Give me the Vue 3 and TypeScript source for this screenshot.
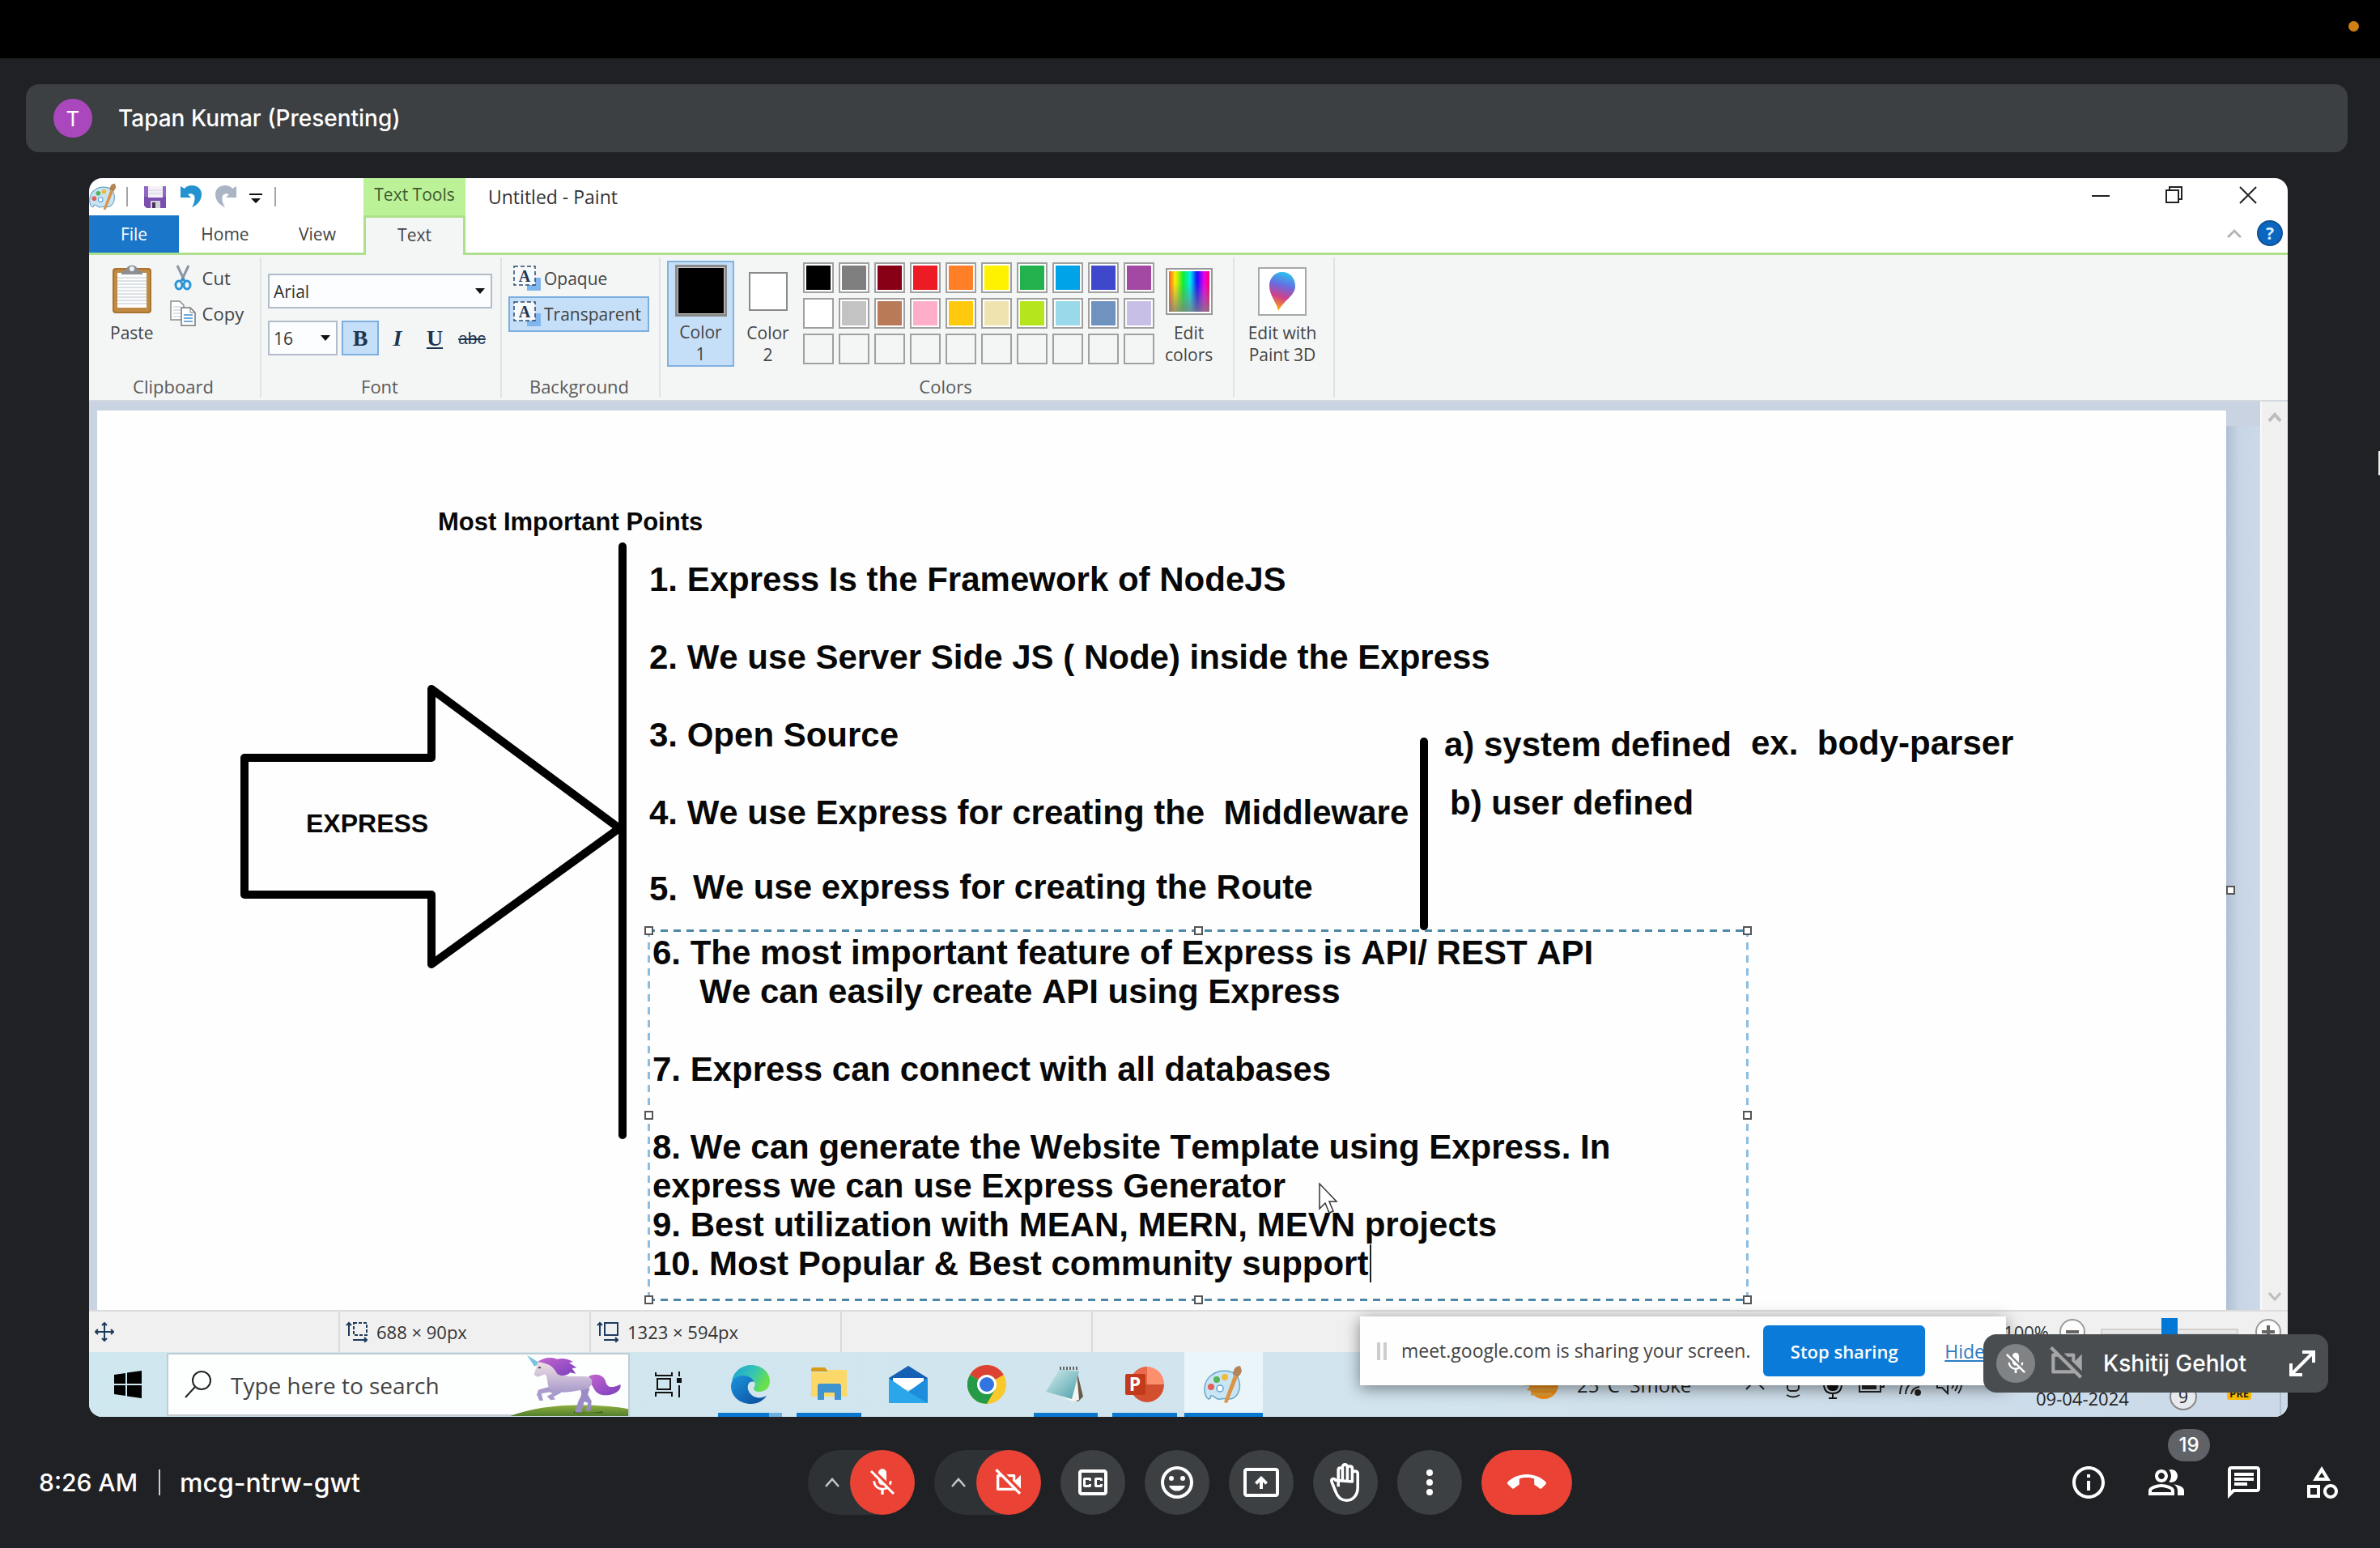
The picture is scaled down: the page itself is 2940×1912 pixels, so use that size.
<script setup lang="ts">
import { ref } from 'vue'

interface Control { label: string; icon: string }

const colorRows: string[][] = [
  ['#000000', '#7f7f7f', '#880015', '#ed1c24', '#ff7f27', '#fff200', '#22b14c', '#00a2e8', '#3f48cc', '#a349a4'],
  ['#ffffff', '#c3c3c3', '#b97a57', '#ffaec9', '#ffc90e', '#efe4b0', '#b5e61d', '#99d9ea', '#7092be', '#c8bfe7'],
  ['', '', '', '', '', '', '', '', '', ''],
]

const font = ref('Arial')
const fontSize = ref('16')
const zoom = ref(50)
const search = ref('')

const points: string[] = [
  '1. Express Is the Framework of NodeJS',
  '2. We use Server Side JS ( Node) inside the Express',
  '3. Open Source',
  '4. We use Express for creating the  Middleware',
]

const note = ref(
  [
    '6. The most important feature of Express is API/ REST API',
    '     We can easily create API using Express',
    '',
    '7. Express can connect with all databases',
    '',
    '8. We can generate the Website Template using Express. In',
    'express we can use Express Generator',
    '9. Best utilization with MEAN, MERN, MEVN projects',
    '10. Most Popular & Best community support',
  ].join('\n'),
)

const handles = ['nw', 'n', 'ne', 'w', 'e', 'sw', 's', 'se']

const micOff =
  'M19 11h-1.7c0 .74-.16 1.43-.43 2.05l1.23 1.23c.56-.98.9-2.09.9-3.28zm-4.02.17c0-.06.02-.11.02-.17V5c0-1.66-1.34-3-3-3S9 3.34 9 5v.18l5.98 5.99zM4.27 3L3 4.27l6.01 6.01V11c0 1.66 1.33 3 2.99 3 .22 0 .44-.03.65-.08l1.66 1.66c-.71.33-1.5.52-2.31.52-2.76 0-5.3-2.1-5.3-5.1H5c0 3.41 2.72 6.23 6 6.72V21h2v-3.28c.91-.13 1.77-.45 2.54-.9L19.73 21 21 19.73 4.27 3z'
const camOff =
  'M9.56 8l-2-2-4.15-4.14L2 3.27 4.73 6H4c-.55 0-1 .45-1 1v10c0 .55.45 1 1 1h12c.21 0 .39-.08.55-.18L19.73 21l1.41-1.41-8.86-8.86L9.56 8zM5 16V8h1.73l8 8H5zm10-8v2.61l6 6V6.5l-4 4V7c0-.55-.45-1-1-1h-5.61l2 2H15z'

const toggles: Control[] = [
  { label: 'microphone', icon: micOff },
  { label: 'camera', icon: camOff },
]

const actions: Control[] = [
  {
    label: 'Captions',
    icon: 'M19 4H5c-1.11 0-2 .9-2 2v12c0 1.1.89 2 2 2h14c1.1 0 2-.9 2-2V6c0-1.1-.9-2-2-2zm0 14H5V6h14v12zM7 15h3c.55 0 1-.45 1-1v-1H9.5v.5h-2v-3h2v.5H11v-1c0-.55-.45-1-1-1H7c-.55 0-1 .45-1 1v4c0 .55.45 1 1 1zm7 0h3c.55 0 1-.45 1-1v-1h-1.5v.5h-2v-3h2v.5H18v-1c0-.55-.45-1-1-1h-3c-.55 0-1 .45-1 1v4c0 .55.45 1 1 1z',
  },
  {
    label: 'Send a reaction',
    icon: 'M12 2a10 10 0 1 0 0 20 10 10 0 0 0 0-20zm0 18a8 8 0 1 1 0-16 8 8 0 0 1 0 16zM8.5 8a1.5 1.5 0 1 0 0 3 1.5 1.5 0 0 0 0-3zm7 0a1.5 1.5 0 1 0 0 3 1.5 1.5 0 0 0 0-3zM7 14c.8 2 2.7 3.3 5 3.3s4.200-1.300 5-3.300z',
  },
  {
    label: 'Present now',
    icon: 'M21 3H3c-1.100 0-2 .9-2 2v14c0 1.100.9 2 2 2h18c1.100 0 2-.9 2-2V5c0-1.100-.9-2-2-2zm0 16H3V5h18v14zM8 12l1.400 1.400L11 11.800V16h2v-4.200l1.600 1.600L16 12l-4-4z',
  },
]

const panels: Control[] = [
  {
    label: 'Meeting details',
    icon: 'M11 7h2v2h-2zm0 4h2v6h-2zm1-9C6.480 2 2 6.480 2 12s4.480 10 10 10 10-4.480 10-10S17.520 2 12 2zm0 18c-4.410 0-8-3.590-8-8s3.590-8 8-8 8 3.590 8 8-3.590 8-8 8z',
  },
  {
    label: 'People',
    icon: 'M15 8c0-1.420-.5-2.730-1.330-3.760.42-.14.86-.24 1.330-.24 2.210 0 4 1.790 4 4s-1.790 4-4 4c-.43 0-.84-.09-1.230-.21-.03-.01-.06-.02-.1-.03A5.980 5.980 0 0 0 15 8zm1.660 5.130C18.030 14.060 19 15.320 19 17v3h4v-3c0-2.180-3.580-3.470-6.340-3.870zM9 6c-1.100 0-2 .9-2 2s.9 2 2 2 2-.9 2-2-.9-2-2-2m0 9c-2.700 0-5.800 1.290-6 2.010V18h12v-1c-.2-.71-3.300-2-6-2M9 4c2.210 0 4 1.790 4 4s-1.790 4-4 4-4-1.790-4-4 1.790-4 4-4zm0 9c2.670 0 8 1.340 8 4v3H1v-3c0-2.660 5.330-4 8-4z',
  },
  {
    label: 'Chat',
    icon: 'M4 4h16v12H5.170L4 17.170V4m0-2c-1.100 0-1.990.9-1.990 2L2 22l4-4h14c1.100 0 2-.9 2-2V4c0-1.100-.9-2-2-2H4zm2 10h8v2H6v-2zm0-3h12v2H6V9zm0-3h12v2H6V6z',
  },
  {
    label: 'Activities',
    icon: 'M12 2l-5.500 9h11L12 2zm0 3.840L13.930 9h-3.870L12 5.840zM17.500 13c-2.490 0-4.500 2.010-4.500 4.500s2.010 4.500 4.500 4.500 4.500-2.010 4.500-4.500-2.010-4.500-4.500-4.500zm0 7c-1.380 0-2.500-1.120-2.500-2.500s1.120-2.500 2.500-2.500 2.500 1.120 2.500 2.500-1.120 2.500-2.500 2.500zM3 21.500h8v-8H3v8zm2-6h4v4H5v-4z',
  },
]

const callEnd =
  'M12 9c-1.600 0-3.150.25-4.600.72v3.100c0 .39-.23.74-.56.9-.98.49-1.870 1.120-2.660 1.850-.18.18-.43.28-.7.28-.28 0-.53-.11-.71-.29L.29 13.080c-.18-.17-.29-.42-.29-.7 0-.28.11-.53.29-.71C3.340 8.780 7.460 7 12 7s8.660 1.780 11.710 4.670c.18.18.29.43.29.71 0 .28-.11.53-.29.71l-2.480 2.480c-.18.18-.43.29-.71.29-.27 0-.52-.11-.7-.28-.79-.74-1.690-1.360-2.670-1.850-.33-.16-.56-.5-.56-.9v-3.100C15.150 9.250 13.600 9 12 9z'
</script>

<template>
  <div class="page">
    <div class="menubar"><span class="privacy-dot"></span></div>

    <header class="presenter">
      <span class="avatar">T</span>
      <span class="presenter-name">Tapan Kumar (Presenting)</span>
    </header>

    <main class="stage">
      <section class="window">
        <!-- title bar -->
        <div class="titlebar">
          <div class="quick">
            <svg class="q-app" viewBox="0 0 48 48"><use href="#paint-logo" /></svg>
            <i class="q-sep"></i>
            <button class="bare q-save" aria-label="Save">
              <svg width="28" height="28" viewBox="0 0 28 28">
                <path d="M0 1h27v27H3l-3-3z" fill="#7b4fb0" />
                <path d="M0 1h27v13H0z" fill="#9067c2" />
                <path d="M5 1h18v14H5z" fill="#f3f0f8" />
                <path d="M6 6h16M6 10h16" stroke="#d4cce2" />
                <path d="M8 19h12v9H8z" fill="#cfd0d8" />
                <path d="M10 21h4v7h-4z" fill="#473260" />
              </svg>
            </button>
            <button class="bare q-undo" aria-label="Undo">
              <svg width="28" height="28" viewBox="0 0 28 28"><path d="M1 1v14h13l-4-4c8-3 12 4 5 16 16-6 16-27 0-27-4 0-7 1-9 4z" fill="#2492cf" /></svg>
            </button>
            <button class="bare q-redo" aria-label="Redo">
              <svg width="28" height="28" viewBox="0 0 28 28"><path d="M27 1v14H14l4-4c-8-3-12 4-5 16C-3 21-3 0 13 0c4 0 7 1 9 4z" fill="#a9b4c4" /></svg>
            </button>
            <button class="bare q-more" aria-label="Customize toolbar">
              <svg width="16" height="14" viewBox="0 0 16 14"><path d="M0 1h16v2H0zM2 7h12l-6 6z" fill="#111" /></svg>
            </button>
            <i class="q-sep"></i>
          </div>
          <div class="context">Text Tools</div>
          <h1 class="title">Untitled - Paint</h1>
          <div class="win-buttons">
            <button class="bare" aria-label="Minimize"><svg width="22" height="22" viewBox="0 0 22 22"><path d="M0 12h22" stroke="#222" stroke-width="2" /></svg></button>
            <button class="bare" aria-label="Restore"><svg width="22" height="22" viewBox="0 0 22 22"><path d="M1 5h15v15H1zM5 5V1h15v15h-4" fill="none" stroke="#222" stroke-width="2" /></svg></button>
            <button class="bare" aria-label="Close"><svg width="22" height="22" viewBox="0 0 22 22"><path d="M1 1l20 20M21 1L1 21" stroke="#222" stroke-width="2" /></svg></button>
          </div>
        </div>

        <!-- tabs -->
        <nav class="tabs">
          <button class="tab file">File</button>
          <button class="tab">Home</button>
          <button class="tab">View</button>
          <button class="tab current">Text</button>
          <div class="tabs-end">
            <button class="bare" aria-label="Collapse ribbon"><svg width="18" height="12" viewBox="0 0 18 12"><path d="M1 11l8-8 8 8" fill="none" stroke="#b4b4b4" stroke-width="3" /></svg></button>
            <button class="help" aria-label="Help">?</button>
          </div>
        </nav>

        <!-- ribbon -->
        <div class="ribbon">
          <section class="group g-clip">
            <div class="body">
              <button class="big paste">
                <svg width="50" height="62" viewBox="0 0 50 62">
                  <rect x="1" y="4" width="48" height="56" rx="4" fill="#a9742f" />
                  <rect x="3" y="6" width="44" height="52" rx="3" fill="#c08a45" />
                  <path d="M7 10h36v43H7z" fill="#fdfdfd" />
                  <path d="M7 16h36M7 20h36M7 24h36M7 28h36M7 32h36M7 36h36M7 40h36M7 44h36M7 48h36" stroke="#bcc6d2" />
                  <path d="M12 12v-3l6-3c1-7 13-7 14 0l6 3v3z" fill="#8b8f94" />
                  <circle cx="25" cy="5" r="3" fill="#f1f1f1" />
                </svg>
                <span>Paste</span>
              </button>
              <div class="stack">
                <button class="row">
                  <svg width="32" height="32" viewBox="0 0 32 32">
                    <path d="M9 1l9 19M23 1l-9 19" stroke="#8c96a4" stroke-width="3" />
                    <ellipse cx="11" cy="25" rx="4" ry="5" fill="none" stroke="#2a94d6" stroke-width="3" />
                    <ellipse cx="21" cy="25" rx="4" ry="5" fill="none" stroke="#2a94d6" stroke-width="3" />
                    <path d="M13 20l3-5 3 5z" fill="#2a94d6" />
                  </svg>
                  <span>Cut</span>
                </button>
                <button class="row">
                  <svg width="32" height="32" viewBox="0 0 32 32">
                    <path d="M1 1h11l5 5v18H1z" fill="#fff" stroke="#8a8a8a" stroke-width="1.500" />
                    <path d="M4 8h9M4 12h9M4 16h9M4 20h9" stroke="#b7c4d2" />
                    <path d="M14 9h11l6 6v16H14z" fill="#fff" stroke="#777" stroke-width="1.500" />
                    <path d="M25 9v6h6" fill="none" stroke="#777" />
                    <path d="M17 18h11M17 22h11M17 26h11" stroke="#3f8fd0" stroke-width="1.500" />
                  </svg>
                  <span>Copy</span>
                </button>
              </div>
            </div>
            <h2>Clipboard</h2>
          </section>

          <section class="group g-font">
            <div class="body font-body">
              <label class="combo wide">
                <select v-model="font" aria-label="Font family"><option>Arial</option></select>
                <svg width="12" height="8" viewBox="0 0 12 8"><path d="M0 0h12L6 7z" fill="#111" /></svg>
              </label>
              <div class="font-row">
                <label class="combo small">
                  <select v-model="fontSize" aria-label="Font size"><option>16</option></select>
                  <svg width="12" height="8" viewBox="0 0 12 8"><path d="M0 0h12L6 7z" fill="#111" /></svg>
                </label>
                <button class="style bold on">B</button>
                <button class="style italic">I</button>
                <button class="style under">U</button>
                <button class="style strike">abc</button>
              </div>
            </div>
            <h2>Font</h2>
          </section>

          <section class="group g-back">
            <div class="body back-body">
              <button v-for="mode in ['Opaque', 'Transparent']" :key="mode" class="mode" :class="{ on: mode === 'Transparent' }">
                <svg width="34" height="32" viewBox="0 0 34 32">
                  <path d="M17 15h17v16H17z" fill="#7fb6ee" />
                  <path d="M1 1h26v23H1z" fill="#f6fafd" stroke="#2d4a6a" stroke-width="1.500" stroke-dasharray="5 3" />
                  <text x="14" y="20" text-anchor="middle" class="mode-letter">A</text>
                </svg>
                <span>{{ mode }}</span>
              </button>
            </div>
            <h2>Background</h2>
          </section>

          <section class="group g-colors">
            <div class="body color-body">
              <button class="slot on"><i class="chip black"></i><span>Color<br />1</span></button>
              <button class="slot"><i class="chip white"></i><span>Color<br />2</span></button>
              <div class="palette">
                <template v-for="(row, r) in colorRows" :key="r">
                  <button
                    v-for="(color, c) in row"
                    :key="c"
                    class="cell"
                    :class="{ empty: !color }"
                    :aria-label="color || 'Empty color'"
                    :style="{ backgroundColor: color || 'transparent' }"
                  ></button>
                </template>
              </div>
              <button class="big edit"><i class="spectrum"></i><span>Edit<br />colors</span></button>
            </div>
            <h2>Colors</h2>
          </section>

          <section class="group g-3d">
            <div class="body">
              <button class="big edit3d">
                <svg width="60" height="60" viewBox="0 0 60 60">
                  <defs>
                    <linearGradient id="drop" x1="0.600" y1="0" x2="0.400" y2="1">
                      <stop offset="0" stop-color="#27c3f0" /><stop offset="0.350" stop-color="#6a6be0" />
                      <stop offset="0.650" stop-color="#d0408a" /><stop offset="1" stop-color="#ffb000" />
                    </linearGradient>
                  </defs>
                  <rect x="1" y="1" width="58" height="58" fill="#fff" stroke="#a8a8a8" stroke-width="2" />
                  <path d="M30 6c10 0 16 8 16 17 0 12-12 16-21 31-1-9-11-19-11-31C14 14 20 6 30 6z" fill="url(#drop)" />
                </svg>
                <span>Edit with<br />Paint 3D</span>
              </button>
            </div>
          </section>
        </div>

        <!-- drawing area -->
        <div class="workspace">
          <div class="paper">
            <svg class="shapes" width="2600" height="1110" viewBox="0 0 2600 1110" fill="none" stroke="#000" stroke-width="10" stroke-linecap="round" stroke-linejoin="round">
              <path d="M182 429h231v-85l232 172-232 168v-86H182z" />
              <path d="M649 168v727M1639 409v228" />
            </svg>
            <p class="ink heading">Most Important Points</p>
            <p class="ink express">EXPRESS</p>
            <ul class="ink points">
              <li v-for="p in points" :key="p">{{ p }}</li>
            </ul>
            <p class="ink five">5.</p>
            <p class="ink route">We use express for creating the Route</p>
            <p class="ink sys">a) system defined</p>
            <p class="ink ex">ex.&nbsp; body-parser</p>
            <p class="ink usr">b) user defined</p>
            <div class="textbox">
              <textarea v-model="note" aria-label="Text on canvas" spellcheck="false"></textarea>
              <i v-for="h in handles" :key="h" class="handle" :class="h"></i>
              <i class="caret"></i>
            </div>
            <svg class="pointer" width="24" height="40" viewBox="0 0 24 40"><path d="M1 2v31l7-7 5 12 5-2-5-12h9z" fill="#fff" stroke="#333" stroke-width="1.500" /></svg>
            <i class="handle paper-handle"></i>
          </div>
          <div class="gutter"></div>
          <div class="scroll">
            <svg width="16" height="14" viewBox="0 0 16 14"><path d="M1 12l7-8 7 8" fill="none" stroke="#bdbdbd" stroke-width="4" /></svg>
            <svg width="16" height="14" viewBox="0 0 16 14"><path d="M1 2l7 8 7-8" fill="none" stroke="#bdbdbd" stroke-width="3" /></svg>
          </div>
        </div>

        <!-- status bar -->
        <div class="status">
          <div class="st">
            <svg width="24" height="24" viewBox="0 0 24 24" fill="none" stroke="#1f3b5c" stroke-width="2"><path d="M12 1v22M1 12h22M9 4l3-3 3 3M9 20l3 3 3-3M4 9l-3 3 3 3M20 9l3 3-3 3" /></svg>
          </div>
          <div class="st">
            <svg width="28" height="26" viewBox="0 0 28 26" fill="none" stroke="#1f3b5c" stroke-width="2"><path d="M4 18V2M1 5l3-3 3 3M9 23h17M23 20l3 3-3 3" /><path d="M10 2h16v15H10z" stroke-dasharray="4 2" /></svg>
            <span>688 × 90px</span>
          </div>
          <div class="st">
            <svg width="28" height="26" viewBox="0 0 28 26" fill="none" stroke="#1f3b5c" stroke-width="2"><path d="M4 18V2M1 5l3-3 3 3M9 23h17M23 20l3 3-3 3M10 2h16v15H10z" /></svg>
            <span>1323 × 594px</span>
          </div>
          <div class="st"></div>
          <div class="zoom">
            <span class="pct">100%</span>
            <button class="round" aria-label="Zoom out"><svg width="16" height="16" viewBox="0 0 16 16"><path d="M0 8h16" stroke="#666" stroke-width="4" /></svg></button>
            <input v-model="zoom" type="range" min="0" max="100" aria-label="Zoom" />
            <button class="round" aria-label="Zoom in"><svg width="16" height="16" viewBox="0 0 16 16"><path d="M0 8h16M8 0v16" stroke="#666" stroke-width="4" /></svg></button>
          </div>
        </div>

        <!-- taskbar -->
        <div class="taskbar">
          <button class="bare start" aria-label="Start">
            <svg width="34" height="34" viewBox="0 0 34 34"><path d="M0 5l14-2v13H0zM16 2.500L34 0v16H16zM0 18h14v13L0 29zM16 18h18v16l-18-2.500z" fill="#000" /></svg>
          </button>
          <label class="searchbox">
            <svg width="34" height="34" viewBox="0 0 34 34"><circle cx="21" cy="12" r="11" fill="none" stroke="#222" stroke-width="2" /><path d="M13 20L1 33" stroke="#222" stroke-width="2" /></svg>
            <input v-model="search" type="text" placeholder="Type here to search" />
            <svg class="unicorn" width="148" height="78" viewBox="0 0 148 78">
              <defs>
                <linearGradient id="hill" x1="0" y1="0" x2="0" y2="1"><stop offset="0" stop-color="#8fae3f" /><stop offset="1" stop-color="#4d7a2a" /></linearGradient>
                <linearGradient id="coat" x1="0" y1="0" x2="0" y2="1"><stop offset="0" stop-color="#f2e2e4" /><stop offset="1" stop-color="#a99acb" /></linearGradient>
                <linearGradient id="mane" x1="0" y1="0" x2="1" y2="1"><stop offset="0" stop-color="#c465cf" /><stop offset="1" stop-color="#7a3fbd" /></linearGradient>
              </defs>
              <g transform="scale(.574 .333) translate(-923 -213)">
                <path d="M923 450Q990 405 1085 407q60 2 96 14v30z" fill="url(#hill)" />
                <path d="M1064 430q30 10 62 0v6h-62z" fill="#3c5d20" />
                <path d="M963 221l28 30-12 12z" fill="#7bc3df" />
                <path d="M1096 300c16-14 32-4 36 18 4 26 14 26 32 12 4 22-14 40-32 40-28-2-24-40-36-50z" fill="url(#mane)" />
                <path d="M1074 340c10 18 6 34 0 50l-8 44h14l6-40 8 4-4 30h10l2-36-8-24 4-24z" fill="#9a8cc4" />
                <path d="M1012 338l-24 12-4 18 6 22h8l-4-26 18-6 6 6-12 10 8 14 10-2-4-10 16-14-2-22z" fill="#a99acb" />
                <path d="M986 250c10-10 26-8 36 14l8 26c20 16 46 6 66 12 12 10 8 36-6 46-24 4-50 22-76 2-10-16-4-40-12-58l-16 10-8-8z" fill="url(#coat)" />
                <path d="M986 246c14-18 30-18 42-10 16-6 28 4 34 10l-8 4 16 18-10 2 8 20-12-4c-8 14-20 14-28 4-8-22-12-36-42-44z" fill="url(#mane)" />
                <circle cx="990" cy="268" r="3" fill="#333" />
              </g>
            </svg>
          </label>
          <button class="bare taskview" aria-label="Task view">
            <svg width="36" height="32" viewBox="0 0 36 32" fill="none" stroke="#111" stroke-width="2"><path d="M2 1v4h20V1M4 9h16v13H4zM2 31v-5h20v5M31 0v6M31 17v15" /><path d="M28 8h6v6h-6z" fill="#111" stroke="none" /></svg>
          </button>
          <div class="apps">
            <button class="app open edge" aria-label="Edge">
              <svg width="48" height="48" viewBox="0 0 48 48">
                <defs>
                  <linearGradient id="e1" x1="0" y1="0" x2="1" y2="0.400"><stop offset="0" stop-color="#1b9fd8" /><stop offset="0.600" stop-color="#36c6b2" /><stop offset="1" stop-color="#6ae04a" /></linearGradient>
                  <linearGradient id="e2" x1="0" y1="0" x2="1" y2="1"><stop offset="0" stop-color="#1b94dd" /><stop offset="1" stop-color="#0c4a9a" /></linearGradient>
                </defs>
                <path d="M1 20C3 8 13 0 25 0c13 0 23 9 23 20 0 8-6 13-13 13-5 0-7-2-7-4s3-3 1-8c-4-9-21-8-28-1z" fill="url(#e1)" />
                <path d="M0 26c0-8 7-13 14-13 6 0 12 2 15 8-7-2-9 4-8 9 2 8 12 14 23 8-4 6-11 10-19 10C10 48 0 38 0 26z" fill="url(#e2)" />
              </svg>
            </button>
            <button class="app open" aria-label="File Explorer">
              <svg width="46" height="42" viewBox="0 0 46 42">
                <path d="M1 3q0-3 3-3h14l4 5H1z" fill="#d79b18" /><path d="M1 6h19l3-3h22v33H1z" fill="#fbd867" />
                <path d="M9 40V23q0-3 3-3h23q3 0 3 3v17h-8v-9H17v9z" fill="#3f93cf" />
              </svg>
            </button>
            <button class="app" aria-label="Mail">
              <svg width="48" height="46" viewBox="0 0 48 46">
                <path d="M0 15L24 0l24 15v8H0z" fill="#1560b4" /><path d="M5 15h38v14H5z" fill="#fff" />
                <path d="M0 15l24 17 24-17v31H0z" fill="#2aa6ea" /><path d="M48 15v31L24 32z" fill="#1c8edb" />
              </svg>
            </button>
            <button class="app" aria-label="Chrome">
              <svg width="48" height="48" viewBox="0 0 48 48">
                <circle cx="24" cy="24" r="24" fill="#f9c92c" />
                <path d="M24 24L3.200 12A24 24 0 0 1 44.800 12z" fill="#dc4234" />
                <path d="M24 24l-20.800-12A24 24 0 0 0 24 48l10.400-18z" fill="#259b48" />
                <circle cx="24" cy="24" r="12" fill="#fff" /><circle cx="24" cy="24" r="9" fill="#3375e0" />
              </svg>
            </button>
            <button class="app open" aria-label="Notepad">
              <svg width="48" height="46" viewBox="0 0 48 46">
                <defs><linearGradient id="np" x1="0" y1="0" x2="1" y2="1"><stop offset="0" stop-color="#d7eef0" /><stop offset="1" stop-color="#4b9fa8" /></linearGradient></defs>
                <path d="M38 5l8 33-6 6-6-2z" fill="#6a5a48" /><path d="M14 36l24-28 3 34-8 2z" fill="#f4f4f0" />
                <path d="M17 4l24 3-9 34L0 32z" fill="url(#np)" /><path d="M17 3h24" stroke="#666" stroke-width="4" stroke-dasharray="2 2" />
              </svg>
            </button>
            <button class="app open" aria-label="PowerPoint">
              <svg width="48" height="44" viewBox="0 0 48 44">
                <path d="M27 0a21 22 0 1 0 21 22H27z" fill="#d2502f" /><path d="M27 0a21 22 0 0 1 21 22H27z" fill="#fb8f6e" /><path d="M27 0v22H6A21 22 0 0 1 27 0z" fill="#e9694a" />
                <rect x="0" y="9" width="25" height="26" rx="2" fill="#c13b1b" />
                <text x="12" y="30" text-anchor="middle" class="ppt-letter">P</text>
              </svg>
            </button>
            <button class="app open active" aria-label="Paint"><svg width="48" height="48" viewBox="0 0 48 48"><use href="#paint-logo" /></svg></button>
          </div>
          <div class="tray">
            <svg width="44" height="44" viewBox="0 0 44 44"><circle cx="24" cy="22" r="18" fill="#ee8a17" /><path d="M0 22h30M4 28h36M8 34h26" stroke="#d9a03f" stroke-width="3" /></svg>
            <span class="weather">25°C&nbsp; Smoke</span>
            <span class="ti"><svg width="24" height="14" viewBox="0 0 24 14"><path d="M1 13L12 2l11 11" fill="none" stroke="#222" stroke-width="2" /></svg></span>
            <span class="ti"><svg width="22" height="36" viewBox="0 0 22 36" fill="none" stroke="#222" stroke-width="2"><rect x="3" y="6" width="14" height="20" rx="4" /><path d="M2 31q8 5 16 0M17 17h4" /></svg></span>
            <span class="ti"><svg width="26" height="36" viewBox="0 0 26 36"><rect x="6" y="0" width="14" height="26" rx="6" fill="#111" /><path d="M2 17q0 12 11 12t11-12M13 29v6M8 35h10" fill="none" stroke="#111" stroke-width="2" /></svg></span>
            <span class="ti"><svg width="32" height="22" viewBox="0 0 32 22"><path d="M1 1h26v19H1zM27 6h4v8h-4" fill="none" stroke="#222" stroke-width="2" /><path d="M4 4h18v13H4z" fill="#222" /></svg></span>
            <span class="ti"><svg width="28" height="28" viewBox="0 0 28 28" fill="none" stroke="#222" stroke-width="2"><path d="M1 26Q2 3 25 2M8 26Q9 11 25 9M15 26q1-8 10-9" /><circle cx="23" cy="24" r="3" fill="#222" /></svg></span>
            <span class="ti"><svg width="32" height="26" viewBox="0 0 32 26" fill="none" stroke="#222" stroke-width="2"><path d="M1 9h6l7-7v22l-7-7H1zM19 8q4 5 0 10M23 5q6 8 0 16M27 2q8 11 0 22" /></svg></span>
            <span class="date">09-04-2024</span>
            <span class="notify">9</span>
            <span class="pre">PRE</span>
            <i class="desk"></i>
          </div>
        </div>

        <!-- sharing notice -->
        <div class="sharing">
          <i class="grip"></i>
          <span>meet.google.com is sharing your screen.</span>
          <button class="stop">Stop sharing</button>
          <a href="#" class="hide">Hide</a>
        </div>
      </section>

      <div class="self">
        <span class="self-mic"><svg width="32" height="32" viewBox="0 0 24 24" fill="#fff"><path :d="micOff" /></svg></span>
        <svg width="50" height="50" viewBox="0 0 24 24" fill="#a4a6a8"><path :d="camOff" /></svg>
        <span class="self-name">Kshitij Gehlot</span>
        <button class="bare" aria-label="Expand"><svg width="32" height="32" viewBox="0 0 32 32"><path d="M3 29L29 3M16 2h14v13M2 16v14h14" fill="none" stroke="#fff" stroke-width="4" /></svg></button>
      </div>
      <i class="edge-mark"></i>
    </main>

    <footer class="controls">
      <div class="meeting"><span>8:26 AM</span><i></i><span class="code">mcg-ntrw-gwt</span></div>
      <div class="buttons">
        <div v-for="t in toggles" :key="t.label" class="toggle">
          <button class="more" :aria-label="t.label + ' settings'"><svg width="20" height="14" viewBox="0 0 20 14"><path d="M2 12l8-9 8 9" fill="none" stroke="#c4c7c9" stroke-width="2.500" /></svg></button>
          <button class="circle red" :aria-label="'Turn on ' + t.label"><svg width="40" height="40" viewBox="0 0 24 24" fill="#fff"><path :d="t.icon" /></svg></button>
        </div>
        <button v-for="a in actions" :key="a.label" class="circle" :aria-label="a.label"><svg width="48" height="48" viewBox="0 0 24 24" fill="#fff"><path :d="a.icon" /></svg></button>
        <button class="circle" aria-label="Raise hand">
          <svg width="48" height="48" viewBox="0 0 24 24" fill="none" stroke="#fff" stroke-width="1.800" stroke-linejoin="round">
            <path d="M7.600 14.600V4.300c0-1.700 2.600-1.700 2.600 0V11.500M10.200 11.500V2.600c0-2.200 3-2.200 3 0V11.500M13.200 11.500V3.300c0-1.700 3-1.700 3 0V11.500M16.200 11.500V6.400c0-1.800 3.400-1.800 3.400 0v8.700c0 4.600-2.800 8-6.900 8-3.500 0-5.500-2.100-6.600-5.100L3.500 11.500c-.5-1.600 1.600-2.500 2.500-.8z" />
          </svg>
        </button>
        <button class="circle" aria-label="More options"><svg width="48" height="48" viewBox="0 0 24 24" fill="#fff"><circle cx="12" cy="6" r="2" /><circle cx="12" cy="12" r="2" /><circle cx="12" cy="18" r="2" /></svg></button>
        <button class="circle red leave" aria-label="Leave call"><svg width="48" height="48" viewBox="0 0 24 24" fill="#fff"><path :d="callEnd" /></svg></button>
      </div>
      <div class="panels">
        <button v-for="p in panels" :key="p.label" class="panel" :aria-label="p.label">
          <svg width="48" height="48" viewBox="0 0 24 24" fill="#fff"><path :d="p.icon" /></svg>
          <span v-if="p.label === 'People'" class="badge">19</span>
        </button>
      </div>
    </footer>

    <svg class="defs" aria-hidden="true">
      <symbol id="paint-logo" viewBox="0 0 48 48">
        <path d="M6 42C-1 38-1 20 9 13c9-8 27-8 33 2 5 10 2 22-6 26-6 3-9-1-15 1-5 2-8-4-11-4-3-1 0 4-4 4z" fill="#c9e4f2" stroke="#6aa7c8" stroke-width="1.500" />
        <circle cx="9" cy="27" r="4" fill="#e0605a" /><circle cx="16" cy="18" r="4" fill="#55b457" /><circle cx="26" cy="15" r="4" fill="#eebb3d" /><circle cx="20" cy="29" r="4" fill="#fff" stroke="#5c9fd0" stroke-width="1.500" />
        <path d="M25 46l12-33 5 2-13 32z" fill="#dc9347" /><path d="M36 12c0-6 3-11 9-11l2 6c-1 4-3 6-5 8z" fill="#b58458" />
      </symbol>
    </svg>
  </div>
</template>

<style>
body {
  background: #202124;
}
</style>

<style scoped>
* {
  box-sizing: border-box;
}
.page {
  display: flex;
  flex-direction: column;
  min-height: 100vh;
  overflow: hidden;
  background: #202124;
  font-family: Inter, "Open Sans", sans-serif;
  color: #fff;
}
button {
  font: inherit;
  color: inherit;
  border: 0;
  padding: 0;
  margin: 0;
  background: none;
}
svg {
  display: block;
  flex: none;
}
.bare {
  display: flex;
  align-items: center;
  justify-content: center;
}
.defs {
  position: absolute;
  width: 0;
  height: 0;
}
.menubar {
  height: 72px;
  background: #000;
  display: flex;
  align-items: center;
  justify-content: flex-end;
  padding: 0 26px 8px 0;
}
.privacy-dot {
  width: 13px;
  height: 13px;
  border-radius: 50%;
  background: #d07f12;
}
.presenter {
  margin: 32px 40px 32px 32px;
  height: 84px;
  border-radius: 16px;
  background: #3c4043;
  display: flex;
  align-items: center;
  padding-left: 34px;
  gap: 32px;
  font-size: 28px;
  font-weight: 500;
}
.avatar {
  width: 48px;
  height: 48px;
  border-radius: 50%;
  background: #ab47bc;
  display: flex;
  align-items: center;
  justify-content: center;
  font-size: 26px;
  font-weight: 400;
}
.stage {
  position: relative;
  flex: 1;
  display: flex;
  margin: 0 114px 0 110px;
}
.window {
  position: relative;
  flex: 1;
  min-width: 0;
  display: flex;
  flex-direction: column;
  border-radius: 16px;
  overflow: hidden;
  background: #fff;
  color: #444;
  font-family: "Open Sans", "Noto Sans", sans-serif;
  font-size: 21px;
}
.titlebar {
  display: flex;
  height: 46px;
}
.quick {
  width: 339px;
  display: flex;
  align-items: center;
  padding: 2px 0;
}
.q-app {
  width: 34px;
  height: 34px;
}
.q-sep {
  width: 2px;
  height: 24px;
  background: #a5a5a5;
  margin: 0 17px 0 12px;
}
.q-save {
  margin-left: 3px;
}
.q-undo {
  margin-left: 16px;
}
.q-redo {
  margin-left: 15px;
}
.q-more {
  margin: 4px 3px 0 15px;
}
.context {
  width: 126px;
  background: #bcf297;
  text-align: center;
  line-height: 40px;
  color: #3e5a30;
}
.title {
  margin: 0 0 0 28px;
  font-size: 23px;
  font-weight: 400;
  line-height: 46px;
  color: #333;
}
.win-buttons {
  margin-left: auto;
  display: flex;
  gap: 69px;
  padding: 0 38px 5px 0;
}
.tabs {
  display: flex;
  height: 49px;
  box-shadow: inset 0 -3px 0 #ade08c;
}
.tab {
  width: 114px;
  height: 46px;
  color: #444;
}
.tab.file {
  width: 111px;
  background: #1976c8;
  color: #fff;
}
.tab.current {
  width: 126px;
  height: 49px;
  border: 3px solid #ade08c;
  border-bottom: 0;
  background: #f4f6f6;
  padding-bottom: 4px;
}
.tabs-end {
  margin-left: auto;
  display: flex;
  align-items: center;
  gap: 19px;
  padding: 0 6px 5px 0;
}
.help {
  width: 32px;
  height: 32px;
  border-radius: 50%;
  background: #0b66c0;
  border: 2px solid #0d5296;
  color: #d8efff;
  font-weight: 700;
  line-height: 26px;
}
.ribbon {
  display: flex;
  height: 181px;
  background: #f4f6f6;
  border-bottom: 2px solid #d5dae0;
}
.group {
  display: flex;
  flex-direction: column;
  justify-content: space-between;
  position: relative;
}
.group::after {
  content: "";
  position: absolute;
  right: 0;
  top: 3px;
  bottom: 3px;
  width: 2px;
  background: #e0e3e6;
}
.group h2 {
  margin: 0;
  padding-right: 5px;
  font-size: 22px;
  font-weight: 400;
  line-height: 34px;
  text-align: center;
  color: #5a5a5a;
}
.g-clip { width: 213px; }
.g-font { width: 297px; }
.g-back { width: 196px; }
.g-colors { width: 709px; }
.g-3d { width: 124px; }
.body {
  display: flex;
}
.big {
  display: flex;
  flex-direction: column;
  align-items: center;
  line-height: 27px;
}
.paste {
  padding-top: 12px;
  margin-left: 26px;
  gap: 9px;
}
.stack {
  display: flex;
  flex-direction: column;
  gap: 12px;
  padding: 12px 0 0 20px;
}
.row {
  display: flex;
  align-items: center;
  gap: 8px;
  height: 32px;
  font-size: 22px;
}
.font-body {
  flex-direction: column;
  gap: 15px;
  padding: 23px 0 0 8px;
}
.font-row {
  display: flex;
}
.combo {
  position: relative;
  display: flex;
  align-items: center;
  height: 43px;
  border: 2px solid #b3bccb;
  background: #fcfdfe;
}
.combo.wide { width: 277px; }
.combo.small { width: 86px; margin-right: 5px; }
.combo select {
  flex: 1;
  min-width: 0;
  height: 100%;
  appearance: none;
  border: 0;
  background: none;
  padding: 0 0 0 5px;
  font: inherit;
  color: #333;
}
.combo svg {
  margin-right: 7px;
}
.style {
  width: 46px;
  height: 43px;
  font-family: "Liberation Serif", serif;
  font-size: 28px;
  font-weight: 700;
  color: #1e3550;
}
.style.on {
  background: #c5dff8;
  border: 2px solid #7aaede;
}
.style.italic { font-style: italic; }
.style.under { text-decoration: underline; }
.style.strike {
  font-family: "Liberation Sans", sans-serif;
  font-size: 21px;
  font-weight: 400;
  text-decoration: line-through;
}
.back-body {
  flex-direction: column;
  padding: 7px 0 0 8px;
}
.mode {
  width: 174px;
  height: 44px;
  display: flex;
  align-items: center;
  gap: 4px;
  padding-left: 4px;
  border: 2px solid transparent;
}
.mode.on {
  background: #c5dff8;
  border-color: #7aaede;
}
.mode-letter {
  font: 700 20px "Liberation Serif", serif;
  fill: #1e3550;
}
.color-body {
  padding: 7px 0 0 8px;
}
.slot {
  width: 83px;
  height: 131px;
  display: flex;
  flex-direction: column;
  justify-content: space-between;
  align-items: center;
  padding: 4px 0 1px;
  line-height: 27px;
}
.slot.on {
  background: #c5dff8;
  border: 2px solid #82b2e0;
  padding: 3px 0 0;
}
.chip {
  display: block;
  border: 2px solid #8a8a8a;
}
.chip.black {
  width: 64px;
  height: 64px;
  background: #000;
  border-width: 3px;
  box-shadow: inset 0 0 0 1px #ccc;
}
.chip.white {
  width: 48px;
  height: 48px;
  margin-top: 10px;
  background: #fff;
}
.palette {
  display: grid;
  grid-template-columns: repeat(10, 38px);
  grid-auto-rows: 38px;
  gap: 6px;
  margin: 2px 0 0 2px;
  align-content: start;
}
.cell {
  border: 2px solid #a0a0a0;
  box-shadow: inset 0 0 0 2px #fff;
}
.cell.empty {
  box-shadow: none;
}
.edit {
  margin-left: 13px;
  padding-top: 9px;
  gap: 9px;
}
.spectrum {
  width: 58px;
  height: 58px;
  border: 2px solid #999;
  box-shadow: inset 0 0 0 2px #fff;
  background:
    linear-gradient(rgba(128, 128, 128, 0) 30%, rgba(128, 128, 128, 0.85)),
    linear-gradient(90deg, #f33, #fe0 18%, #1e3 36%, #0ee 52%, #11f 68%, #e0e 84%, #f03);
}
.edit3d {
  width: 118px;
  padding-top: 15px;
  gap: 8px;
}
.workspace {
  flex: 1;
  min-height: 0;
  display: flex;
  background: #c9d3e2;
}
.paper {
  position: relative;
  flex: 1;
  margin: 11px 0 0 10px;
  background: #fefefe;
}
.gutter {
  width: 42px;
  margin-top: 30px;
  background: linear-gradient(90deg, #afbfd2, #c8d5e5 16px, #ccd9e8);
}
.scroll {
  width: 34px;
  background: #f0f0f0;
  border-left: 2px solid #fafafa;
  display: flex;
  flex-direction: column;
  justify-content: space-between;
  align-items: center;
  padding: 12px 0 9px;
}
.shapes,
.ink,
.textbox,
.pointer,
.handle,
.caret {
  position: absolute;
}
.shapes {
  left: 0;
  top: 0;
}
.ink {
  margin: 0;
  padding: 0;
  list-style: none;
  white-space: pre;
  color: #080808;
  font: 700 42px/48px "Liberation Sans", sans-serif;
  font-kerning: none;
}
.heading {
  left: 421px;
  top: 114px;
  font-size: 31px;
}
.express {
  left: 258px;
  top: 486px;
  font-size: 32px;
}
.points {
  left: 682px;
  top: 185px;
  display: grid;
  row-gap: 48px;
}
.five { left: 682px; top: 567px; }
.route { left: 736px; top: 565px; }
.sys { left: 1664px; top: 389px; }
.ex { left: 2043px; top: 387px; }
.usr { left: 1671px; top: 461px; }
.textbox {
  left: 680px;
  top: 641px;
  width: 1360px;
  height: 459px;
  background:
    repeating-linear-gradient(90deg, #4d87a8 0 9px, transparent 9px 16px) 0 0 / 100% 3px no-repeat,
    repeating-linear-gradient(90deg, #4d87a8 0 9px, transparent 9px 16px) 0 100% / 100% 3px no-repeat,
    repeating-linear-gradient(#8dbde0 0 9px, transparent 9px 16px) 0 0 / 3px 100% no-repeat,
    repeating-linear-gradient(#8dbde0 0 9px, transparent 9px 16px) 100% 0 / 3px 100% no-repeat;
}
.textbox textarea {
  display: block;
  width: 100%;
  height: 100%;
  padding: 5px 0 0 6px;
  border: 0;
  background: none;
  resize: none;
  overflow: hidden;
  white-space: pre;
  color: #080808;
  font: 700 42px/48px "Liberation Sans", sans-serif;
  font-kerning: none;
}
.handle {
  width: 11px;
  height: 11px;
  border: 2px solid #555;
  background: #fff;
}
.nw, .w, .sw { left: -4px; }
.n, .s { left: 675px; }
.ne, .e, .se { right: -4px; }
.nw, .n, .ne { top: -4px; }
.w, .e { top: 224px; }
.sw, .s, .se { bottom: -4px; }
.caret {
  left: 892px;
  top: 389px;
  width: 2px;
  height: 47px;
  background: #222;
}
.pointer {
  left: 1509px;
  top: 953px;
}
.paper-handle {
  right: -11px;
  top: 587px;
}
.status {
  display: flex;
  height: 52px;
  background: #f0f0f0;
  border-top: 2px solid #dcdcdc;
  color: #333;
  font-size: 22px;
}
.st {
  width: 310px;
  display: flex;
  align-items: center;
  gap: 10px;
  padding-left: 7px;
  border-right: 2px solid #dadada;
}
.zoom {
  margin-left: auto;
  display: flex;
  align-items: center;
  padding-right: 8px;
}
.round {
  width: 32px;
  height: 32px;
  border: 2px solid #999;
  border-radius: 50%;
  background: #fdfdfd;
  display: flex;
  align-items: center;
  justify-content: center;
}
.pct {
  margin-right: 13px;
}
.zoom input {
  appearance: none;
  width: 170px;
  height: 8px;
  margin: 0 21px 0 19px;
  border: 2px solid #d0d0d0;
  background: #e8e8e8;
}
.zoom input::-webkit-slider-thumb {
  appearance: none;
  width: 20px;
  height: 34px;
  background: #0078d7;
}
.taskbar {
  display: flex;
  align-items: center;
  height: 80px;
  background: linear-gradient(90deg, #cfe7ee, #d2e4ee 60%, #cbd9e8);
  color: #222;
}
.start {
  width: 96px;
}
.searchbox {
  position: relative;
  width: 572px;
  height: 78px;
  border: 2px solid #c4cccf;
  background: #fdfefe;
  display: flex;
  align-items: center;
  padding-left: 20px;
  gap: 22px;
}
.searchbox input {
  width: 300px;
  border: 0;
  padding: 1px 0 0 1px;
  background: none;
  font: 28px/40px "Open Sans", sans-serif;
}
.searchbox input::placeholder {
  color: #444;
  opacity: 1;
}
.unicorn {
  margin-left: auto;
}
.taskview {
  width: 100px;
  padding-right: 4px;
}
.apps {
  display: flex;
  width: 682px;
  height: 100%;
}
.app {
  position: relative;
  flex: 1;
  display: flex;
  align-items: center;
  justify-content: center;
}
.app.open::after {
  content: "";
  position: absolute;
  left: 9px;
  right: 9px;
  bottom: 0;
  height: 5px;
  background: #0a78d0;
}
.app.edge::after {
  background: linear-gradient(90deg, #0a78d0 80%, #6faee0 80%);
}
.app.active {
  background: #e9f5f9;
}
.app.active::after {
  left: 0;
  right: 0;
}
.ppt-letter {
  font: 700 23px "Open Sans", sans-serif;
  fill: #fff;
}
.tray {
  margin-left: auto;
  height: 100%;
  display: flex;
  align-items: center;
}
.weather {
  width: 197px;
  padding-left: 21px;
  margin-right: 20px;
  white-space: nowrap;
  font-size: 24px;
}
.ti {
  width: 48px;
  display: flex;
  justify-content: center;
}
.date {
  width: 122px;
  margin: 34px 0 0 83px;
  font-size: 22px;
}
.notify {
  width: 34px;
  height: 34px;
  margin: 30px 0 0 43px;
  border: 2px solid #888;
  border-radius: 50%;
  background: #e6eaee;
  text-align: center;
  line-height: 30px;
  font-size: 21px;
}
.pre {
  width: 30px;
  height: 16px;
  margin: 22px 35px 0 37px;
  background: #fbb900;
  border-radius: 3px;
  font-size: 13px;
  font-weight: 700;
  line-height: 16px;
  text-align: center;
}
.desk {
  width: 2px;
  height: 100%;
  margin-right: 8px;
  background: #b4c0cc;
}
.sharing {
  position: absolute;
  right: 348px;
  bottom: 39px;
  width: 798px;
  height: 85px;
  display: flex;
  align-items: center;
  padding-left: 21px;
  background: #fefefe;
  box-shadow: 0 4px 18px rgba(0, 0, 0, 0.45);
  color: #444;
  font-size: 23px;
  white-space: nowrap;
}
.sharing span {
  margin-bottom: 2px;
}
.grip {
  width: 12px;
  height: 22px;
  margin-right: 18px;
  border: solid #ccc;
  border-width: 0 4px;
}
.stop {
  width: 200px;
  height: 63px;
  margin: 0 24px 0 auto;
  border-radius: 6px;
  background: #0a7bd8;
  color: #fff;
  font-size: 22px;
  font-weight: 600;
}
.hide {
  margin-right: 26px;
  color: #2a7cc4;
}
.self {
  position: absolute;
  right: -50px;
  bottom: 30px;
  width: 426px;
  height: 72px;
  display: flex;
  align-items: center;
  padding: 0 16px;
  border-radius: 16px;
  background: #4a4d50;
  font-size: 28px;
  font-weight: 500;
}
.self-mic {
  width: 48px;
  height: 48px;
  margin-right: 14px;
  border-radius: 50%;
  background: #808386;
  display: flex;
  align-items: center;
  justify-content: center;
}
.self-name {
  margin: 0 auto 0 20px;
  white-space: nowrap;
}
.edge-mark {
  position: absolute;
  right: -114px;
  top: 337px;
  width: 2px;
  height: 30px;
  background: #eee;
}
.controls {
  display: grid;
  grid-template-columns: 1fr auto 1fr;
  align-items: center;
  height: 162px;
  padding: 0 24px 0 48px;
}
.meeting {
  display: flex;
  align-items: center;
  font-size: 30px;
  font-weight: 500;
}
.meeting i {
  width: 2px;
  height: 32px;
  margin: 0 24px 0 26px;
  background: #ccc;
}
.code {
  font-size: 32px;
}
.buttons {
  display: flex;
  gap: 24px;
  margin-right: 24px;
}
.toggle {
  display: flex;
  width: 132px;
  border-radius: 40px;
  background: #2e3235;
}
.more {
  width: 52px;
  display: flex;
  align-items: center;
  justify-content: center;
  padding-left: 8px;
}
.circle {
  width: 80px;
  height: 80px;
  border-radius: 40px;
  background: #3c4043;
  display: flex;
  align-items: center;
  justify-content: center;
}
.circle.red {
  background: #ea4335;
}
.circle.leave {
  width: 112px;
}
.panels {
  display: flex;
  justify-content: flex-end;
}
.panel {
  position: relative;
  width: 96px;
  height: 96px;
  display: flex;
  align-items: center;
  justify-content: center;
}
.badge {
  position: absolute;
  left: 50px;
  top: -18px;
  width: 52px;
  height: 40px;
  border-radius: 20px;
  background: #5f6368;
  font-size: 24px;
  font-weight: 500;
  line-height: 40px;
  text-align: center;
}
</style>
